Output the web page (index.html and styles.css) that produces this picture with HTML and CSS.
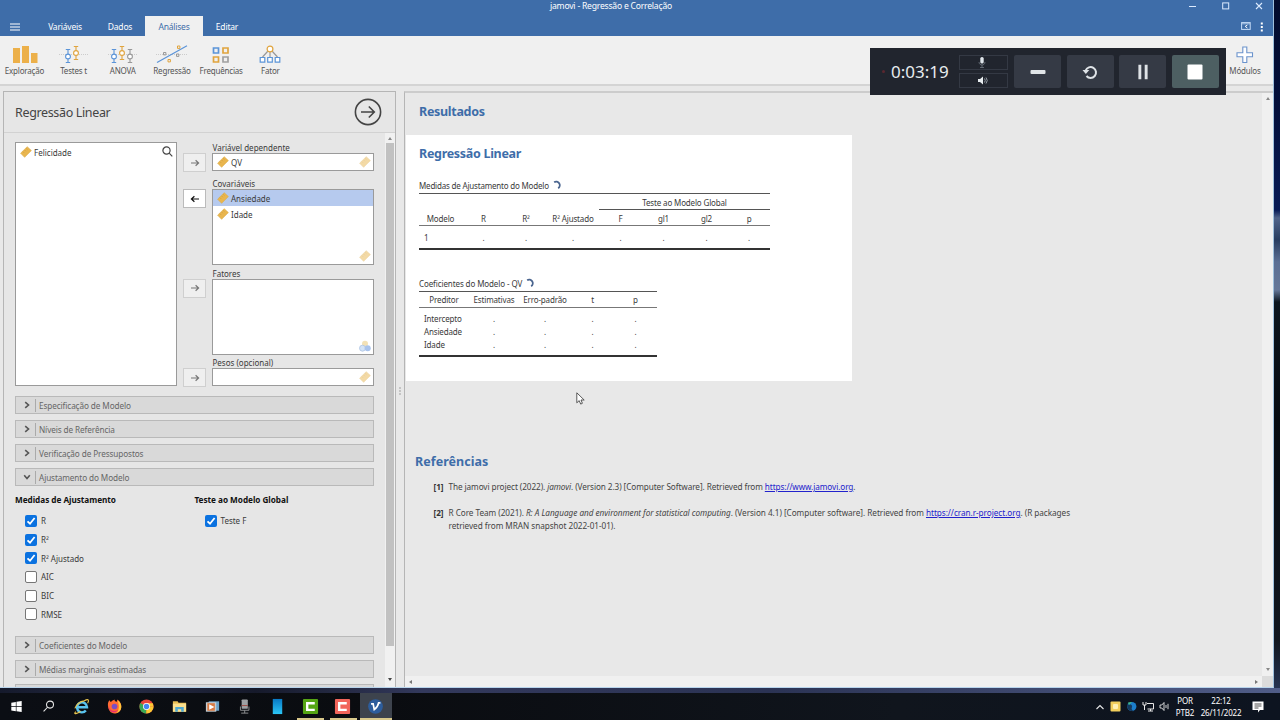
FILE: index.html
```
<!DOCTYPE html>
<html lang="pt">
<head>
  <meta charset="UTF-8">
  <meta name="viewport" content="width=device-width, initial-scale=1.0">
  <title>jamovi - Regressão e Correlação</title>
  <link rel="stylesheet" href="styles.css">
</head>
<body>
  <!-- Shared icons -->
  <svg class="defs" width="0" height="0">
    <symbol id="ruler" viewBox="0 0 12 12">
      <path d="M.6 7.2 7.2 .7 11.4 4.6 4.6 11.3Z" fill="#e9b64f" stroke="#dcab47" stroke-width=".6" stroke-linejoin="round"/>
      <path d="M2.9 5.6l1.3 1.3M4.6 4l1.3 1.3M6.2 2.4l1.3 1.3" stroke="#c58f2c" stroke-width=".5"/>
    </symbol>
    <symbol id="right" viewBox="0 0 10 8">
      <path d="M1 4h7.6M5.6 1.2 8.6 4 5.6 6.8" fill="none" stroke="currentColor" stroke-width="1.2"/>
    </symbol>
    <symbol id="spin" viewBox="0 0 8 9">
      <path d="M1 2A3.1 3.1 0 1 1 4.6 7.4" fill="none" stroke="#4a658f" stroke-width="1.7"/>
    </symbol>
    <symbol id="chev" viewBox="0 0 6 8">
      <path d="M1.2 1.2 4.5 4 1.2 6.8" fill="none" stroke="#555" stroke-width="1.6"/>
    </symbol>
    <symbol id="tick" viewBox="0 0 12 12">
      <path d="M2.5 6.3 5 8.7 9.6 3" fill="none" stroke="#fff" stroke-width="1.8"/>
    </symbol>
  </svg>

  <div class="window">
    <div class="titlebar">
      <span class="app-title">jamovi - Regressão e Correlação</span>
      <div class="win-controls">
        <svg width="8" height="8"><path d="M0 4.5h7" stroke="#dcebff"/></svg>
        <svg width="8" height="8"><rect x=".7" y=".9" width="6" height="6" fill="none" stroke="#dcebff"/></svg>
        <svg width="8" height="8"><path d="M1 1l6 6M7 1 1 7" stroke="#dcebff" stroke-width="1.1"/></svg>
      </div>
    </div>

    <div class="tabs">
      <svg class="burger" width="10" height="8"><path d="M0 1h10M0 4h10M0 7h10" stroke="#fff" stroke-width="1.2"/></svg>
      <span class="tab t-var">Variáveis</span>
      <span class="tab t-dad">Dados</span>
      <span class="tab active">Análises</span>
      <span class="tab t-edi">Editar</span>
      <div class="tab-tools">
        <svg width="10" height="8"><rect x=".6" y=".6" width="8.6" height="6.8" fill="none" stroke="#c6dcf7"/><path d="M1 1.8h8" stroke="#c6dcf7" stroke-width=".8"/><path d="M6.4 3 4.2 4.4 6.4 6" fill="none" stroke="#fff"/></svg>
        <svg width="4" height="10"><path d="M.8 .5h2v2h-2zM.8 4h2v2h-2zM.8 7.5h2v2h-2z" fill="#fff"/></svg>
      </div>
    </div>

    <div class="ribbon">
      <div class="tool w-exp">
        <svg width="28" height="20"><path d="M2 3h7v15H2zM11 1h7v17h-7zM20 8h6.5v10H20z" fill="#ecb04a"/></svg>
        <span>Exploração</span>
      </div>
      <div class="tool">
        <svg width="32" height="20" fill="none" stroke-width="1.1"><path d="M1 9.5h30" stroke="#ccc" stroke-dasharray="1 1"/><g stroke="#5b94d8"><path d="M10 4v14M7.8 4.5h4.4M7.8 17.5h4.4"/><circle cx="10" cy="11.5" r="2.4" fill="#fff"/></g><g stroke="#e0a43e"><path d="M18 1v14M15.8 1.5h4.4M15.8 14.5h4.4"/><circle cx="18" cy="8" r="2.4" fill="#fff"/></g></svg>
        <span>Testes t</span>
      </div>
      <div class="tool">
        <svg width="32" height="20" fill="none" stroke-width="1.1"><path d="M1 9.5h30" stroke="#ccc" stroke-dasharray="1 1"/><g stroke="#5b94d8"><path d="M7 4v14M4.8 4.5h4.4M4.8 17.5h4.4"/><circle cx="7" cy="11.5" r="2.4" fill="#fff"/></g><g stroke="#e0a43e"><path d="M15 1v14M12.8 1.5h4.4M12.8 14.5h4.4"/><circle cx="15" cy="8" r="2.4" fill="#fff"/></g><g stroke="#999"><path d="M23 4v14M20.8 4.5h4.4M20.8 17.5h4.4"/><circle cx="23" cy="11.5" r="2.4" fill="#fff"/></g></svg>
        <span>ANOVA</span>
      </div>
      <div class="tool">
        <svg width="32" height="20" fill="none" stroke-width="1"><path d="M0 9.5h32" stroke="#ccc" stroke-dasharray="1 1"/><path d="M1 17.5 31 .8" stroke="#5b94d8" stroke-width="1.2"/><path d="M7.5 7.5h2.4v2.4H7.5zM20.5 9h2.4v2.4h-2.4z" stroke="#999"/><path d="M21.5 1h2.4v2.4h-2.4zM12 14.5h2.4v2.4H12z" stroke="#e0a43e"/></svg>
        <span>Regressão</span>
      </div>
      <div class="tool">
        <svg width="18" height="20" fill="none" stroke-width="1.7"><path d="M1.5 3h5v5h-5z" stroke="#5b94d8"/><path d="M11 3h5v5h-5zM1.5 12h5v5h-5z" stroke="#e0a43e"/><path d="M11 12h5v5h-5z" stroke="#a0a0a0"/></svg>
        <span>Frequências</span>
      </div>
      <div class="tool">
        <svg width="22" height="20" fill="none" stroke-width="1.2"><path d="M9 6 3.5 12M11 7v5M13 6l5.500 6" stroke="#999"/><circle cx="11" cy="4" r="2.9" fill="#fff" stroke="#e0a43e"/><path d="M1.2 12.5h4.6v4.6H1.2zM8.7 12.5h4.6v4.6H8.7zM16.2 12.5h4.6v4.6h-4.6z" fill="#fff" stroke="#5b94d8"/></svg>
        <span>Fator</span>
      </div>
      <div class="tool modules">
        <svg width="18" height="20"><path d="M6.8 2h4v5.800h5.700v4h-5.700v5.700h-4v-5.700H1v-4h5.800z" fill="#fff" stroke="#6b93cc" stroke-width="1.1"/></svg>
        <span>Módulos</span>
      </div>
    </div>

    <div class="main">
      <!-- Analysis options -->
      <div class="options">
        <div class="options-head">
          <h2>Regressão Linear</h2>
          <svg width="28" height="28" fill="none" stroke="#444"><circle cx="14" cy="14" r="12.6" stroke-width="1.6"/><path d="M7 14h13M14.8 8.5 20.3 14l-5.5 5.5" stroke-width="1.6"/></svg>
        </div>
        <div class="options-body">
          <div class="content">
            <div class="assign">
              <div class="box supplier">
                <div class="var"><svg><use href="#ruler"/></svg>Felicidade</div>
                <svg class="search" width="11" height="11" fill="none" stroke="#444" stroke-width="1.2"><circle cx="4.5" cy="4.5" r="3.6"/><path d="M7.2 7.2 10.3 10.3"/></svg>
              </div>
              <div class="targets">
                <label>Variável dependente</label>
                <div class="target single">
                  <button><svg><use href="#right"/></svg></button>
                  <div class="box"><div class="var"><svg><use href="#ruler"/></svg>QV</div><svg class="hint"><use href="#ruler"/></svg></div>
                </div>
                <label>Covariáveis</label>
                <div class="target multi">
                  <button class="on"><svg><use href="#right"/></svg></button>
                  <div class="box">
                    <div class="var selected"><svg><use href="#ruler"/></svg>Ansiedade</div>
                    <div class="var"><svg><use href="#ruler"/></svg>Idade</div>
                    <svg class="hint"><use href="#ruler"/></svg>
                  </div>
                </div>
                <label>Fatores</label>
                <div class="target multi">
                  <button><svg><use href="#right"/></svg></button>
                  <div class="box"><svg class="hint" viewBox="0 0 12 12"><circle cx="6" cy="3.8" r="3" fill="#e8c56e"/><circle cx="3.5" cy="8.2" r="3" fill="#a9c8ee" stroke="#4f80c4" stroke-width=".7"/><circle cx="8.7" cy="8.2" r="3" fill="#5488da"/></svg></div>
                </div>
                <label>Pesos (opcional)</label>
                <div class="target single">
                  <button><svg><use href="#right"/></svg></button>
                  <div class="box"><svg class="hint"><use href="#ruler"/></svg></div>
                </div>
              </div>
            </div>

            <div class="section"><svg><use href="#chev"/></svg><span>Especificação de Modelo</span></div>
            <div class="section"><svg><use href="#chev"/></svg><span>Níveis de Referência</span></div>
            <div class="section"><svg><use href="#chev"/></svg><span>Verificação de Pressupostos</span></div>
            <div class="section open"><svg><use href="#chev"/></svg><span>Ajustamento do Modelo</span></div>

            <div class="fit">
              <div class="fit-col">
                <h3>Medidas de Ajustamento</h3>
                <div class="check"><svg class="checked"><use href="#tick"/></svg>R</div>
                <div class="check"><svg class="checked"><use href="#tick"/></svg>R²</div>
                <div class="check"><svg class="checked"><use href="#tick"/></svg>R² Ajustado</div>
                <div class="check"><i></i>AIC</div>
                <div class="check"><i></i>BIC</div>
                <div class="check"><i></i>RMSE</div>
              </div>
              <div class="fit-col">
                <h3>Teste ao Modelo Global</h3>
                <div class="check"><svg class="checked"><use href="#tick"/></svg>Teste F</div>
              </div>
            </div>

            <div class="section"><svg><use href="#chev"/></svg><span>Coeficientes do Modelo</span></div>
            <div class="section"><svg><use href="#chev"/></svg><span>Médias marginais estimadas</span></div>
            <div class="section"></div>
          </div>
          <div class="scroll">
            <b class="up"></b>
            <div class="thumb"></div>
            <b class="down"></b>
          </div>
        </div>
      </div>

      <div class="splitter"><i></i><i></i><i></i></div>

      <!-- Results -->
      <div class="results">
        <div class="results-body">
          <h1>Resultados</h1>
          <div class="card">
            <h1>Regressão Linear</h1>

            <div class="caption first"><span>Medidas de Ajustamento do Modelo</span><svg><use href="#spin"/></svg></div>
            <table class="fit-table">
              <colgroup><col class="c43"><col class="c43"><col class="c42"><col class="c52"><col class="c43"><col class="c43"><col class="c43"><col class="c42"></colgroup>
              <thead>
                <tr class="super"><th colspan="4"></th><th colspan="4" class="span">Teste ao Modelo Global</th></tr>
                <tr><th>Modelo</th><th>R</th><th>R²</th><th>R² Ajustado</th><th>F</th><th>gl1</th><th>gl2</th><th>p</th></tr>
              </thead>
              <tbody>
                <tr><td class="name">1</td><td>.</td><td>.</td><td>.</td><td>.</td><td>.</td><td>.</td><td>.</td></tr>
              </tbody>
            </table>

            <div class="caption second"><span>Coeficientes do Modelo - QV</span><svg><use href="#spin"/></svg></div>
            <table class="coef-table">
              <colgroup><col class="c50"><col class="c50"><col class="c52"><col class="c43"><col class="c43"></colgroup>
              <thead>
                <tr><th>Preditor</th><th>Estimativas</th><th>Erro-padrão</th><th>t</th><th>p</th></tr>
              </thead>
              <tbody>
                <tr><td class="name">Intercepto</td><td>.</td><td>.</td><td>.</td><td>.</td></tr>
                <tr><td class="name">Ansiedade</td><td>.</td><td>.</td><td>.</td><td>.</td></tr>
                <tr><td class="name">Idade</td><td>.</td><td>.</td><td>.</td><td>.</td></tr>
              </tbody>
            </table>
          </div>

          <div class="refs">
            <h1>Referências</h1>
            <div class="ref jamovi"><b>[1]</b><p>The jamovi project (2022). <em>jamovi</em>. (Version 2.3) [Computer Software]. Retrieved from <a href="#">https://www.jamovi.org</a>.</p></div>
            <div class="ref"><b>[2]</b><p>R Core Team (2021). <em>R: A Language and environment for statistical computing</em>. (Version 4.1) [Computer software]. Retrieved from <a href="#">https://cran.r-project.org</a>. (R packages<br>retrieved from MRAN snapshot 2022-01-01).</p></div>
          </div>
          <div class="hscroll"><b class="left"></b><b class="right"></b></div>
        </div>
        <div class="vscroll"><b class="up"></b><b class="down"></b></div>
      </div>
    </div>
  </div>

  <div class="taskbar">
    <div class="apps">
      <div class="app"><svg viewBox="0 0 18 18"><path d="M3.5 4.9 8.3 4.2v4.5H3.5zM9 4.1l5.500-.8v5.400H9zM3.500 9.400h4.800v4.500l-4.800-.7zM9 9.400h5.500v5.400L9 14z" fill="#fff"/></svg></div>
      <div class="app"><svg viewBox="0 0 18 18" fill="none" stroke="#e8e8e8" stroke-width="1.1"><circle cx="10.6" cy="7" r="3.7"/><path d="M8 9.8 3.8 14.2"/></svg></div>
      <div class="app"><svg viewBox="0 0 18 18" fill="none"><path d="M4.5 9.7h10.3A5.3 5.3 0 1 0 13.6 13.3" stroke="#59c3ee" stroke-width="2.6"/><path d="M3 14.5C-.5 18 5 16.5 8 14M12 3c5-3 5 0 3.5 2.5M2 11C4 6 8 3.5 12 3" stroke="#eac54e" stroke-width="1.2"/></svg></div>
      <div class="app"><svg viewBox="0 0 18 18"><path d="M2 7C2 5 3 3 4 2.5c0 1 .6 1.5 1.2 1.7C6 3 8 2 9 1.5 9 3 10 3.5 11 4c1-.5 1-1.5 1-2.5 3 2 4.5 5 4.2 8C16 13.5 13 16.5 9 16.5S2 13 2 7Z" fill="#ff6a32"/><path d="M12 2c3 2 4.3 5 4.2 7.5C16 13 14 15 11 16c3-3 3.5-8 1-14Z" fill="#ffc63a"/><path d="M2 8c2 6 7 7 11 4.5-2 3.5-9 5-11-4.5Z" fill="#e72b74"/><circle cx="9" cy="9" r="3" fill="#7a4ec4"/></svg></div>
      <div class="app"><svg viewBox="0 0 18 18"><circle cx="9" cy="9" r="7.5" fill="#e8443a"/><path d="M9 9 2.5 5.3A7.5 7.5 0 0 0 8.8 16.5Z" fill="#38a853"/><path d="M9 9h7.5a7.5 7.5 0 0 1-7.7 7.5Z" fill="#fbc934"/><path d="M9 5.5h6.6L16.5 9H9Z" fill="#fbc934"/><circle cx="9" cy="9" r="3.7" fill="#fff"/><circle cx="9" cy="9" r="2.9" fill="#4385f0"/></svg></div>
      <div class="app"><svg viewBox="0 0 18 18"><path d="M2 3.5h5l1 1.5h8v9.5H2z" fill="#e9bf55"/><path d="M2 6h14v8.5H2z" fill="#fbe08f"/><path d="M4.5 14.5V9.5h9v5h-2.7V12H7.2v2.5z" fill="#4fa9d2"/></svg></div>
      <div class="app"><svg viewBox="0 0 18 18"><path d="M5 3.5h11v10H5z" fill="#6ba1c6"/><path d="M2 4.5h11v10H2z" fill="#c3cdd4"/><path d="M3.5 5.5h8v8h-8z" fill="#d87a43"/><path d="m5.5 6.5 5.5 3-5.5 3Z" fill="#fff"/></svg></div>
      <div class="app"><svg viewBox="0 0 18 18"><rect x="6" y="1.5" width="6.5" height="10" rx="1" fill="#9ea1a4"/><path d="M6 8h6.5" stroke="#9c4a42"/><path d="M4.7 9v4h9V9M9.2 13v3M5.5 16h7.5" fill="none" stroke="#8e9193"/></svg></div>
      <div class="app"><svg viewBox="0 0 18 18"><defs><linearGradient id="ph" x2="0" y2="1"><stop stop-color="#0879c4"/><stop offset="1" stop-color="#2bc6f6"/></linearGradient></defs><path d="M4 1h10v16H4z" fill="url(#ph)"/></svg></div>
      <div class="app run"><svg viewBox="0 0 18 18"><rect x="1" y="1" width="16" height="16" rx="1" fill="#55a514"/><path d="M13.5 5.5H5.5v7h8" fill="none" stroke="#fff" stroke-width="2.5"/></svg></div>
      <div class="app run"><svg viewBox="0 0 18 18"><rect x="1" y="1" width="16" height="16" rx="1" fill="#f2655b"/><path d="M13.5 5.5H5.5v7h8" fill="none" stroke="#fff" stroke-width="2.5"/></svg></div>
      <div class="app run current"><svg viewBox="0 0 18 18"><circle cx="9" cy="9" r="7.8" fill="#2d5d9c"/><path d="M4.3 6.2h2.200L7.700 12.300C10.300 10.500 11.800 8 12.300 5.200h1.900" fill="none" stroke="#fff" stroke-width="1.8"/></svg></div>
    </div>
    <div class="tray">
      <svg width="10" height="8"><path d="M1.5 6 5 2.5 8.5 6" fill="none" stroke="#e8e8e8" stroke-width="1.1"/></svg>
      <svg width="11" height="11"><rect x=".5" y=".5" width="10" height="10" rx="1" fill="#f2cf5c"/><rect x="3" y="3" width="5" height="5" rx="1" fill="#fff1b4"/></svg>
      <svg width="11" height="11"><circle cx="5.8" cy="5.5" r="4.6" fill="#1c7ecb"/><path d="M1 4c3-2 6 0 5 2s0 3.5 2 4C4 11 1 8 1 4Z" fill="#153a5e"/><path d="M2 1.5 6 1 3 4Z" fill="#40bd8b"/></svg>
      <svg width="12" height="11" fill="none" stroke="#e8e8e8"><path d="M5 2.5h6.5v5.5H5.5M1 1v3h3V1M2.5 4v5M6 10h5M8.5 8v2"/></svg>
      <svg width="11" height="11" fill="none" stroke="#e8e8e8" stroke-width=".9"><path d="M1 4h1.8L5 1.5v8L2.8 7H1zM7 4v3M9 2.8v5.4"/></svg>
      <div class="lang">POR<br>PTB2</div>
      <div class="clock">22:12<br>26/11/2022</div>
      <svg width="12" height="12"><path d="M.5 .5h11v8.5H8L6 11.5V9H.5z" fill="#fff"/><path d="M2.5 3h7M2.5 5h7M2.5 7h4" stroke="#222" stroke-width=".8"/></svg>
    </div>
  </div>

  <!-- Screen recorder bar floating over the app -->
  <div class="recorder">
    <span class="dot"></span>
    <span class="time">0:03:19</span>
    <div class="audio">
      <div><svg width="8" height="11"><rect x="2.3" y="0" width="3.4" height="6.5" rx="1.6" fill="#dfe5ea"/><path d="M1 5c0 4 6 4 6 0M4 8v2.5M2 10.5h4" fill="none" stroke="#77808a" stroke-width=".7"/></svg></div>
      <div><svg width="11" height="9"><path d="M1 3h2l3-2.5v8L3 6H1z" fill="#e8edf0"/><path d="M7.5 2.5q1.5 2 0 4M9 1.5q2.5 3 0 6" fill="none" stroke="#929aa2"/></svg></div>
    </div>
    <div class="rec-btn"><svg width="16" height="16"><rect x=".5" y="6" width="15" height="4" rx="1" fill="#e1e5e8"/></svg></div>
    <div class="rec-btn"><svg width="16" height="16"><path d="M4.5 12A5.4 5.4 0 1 0 3.6 6.5" fill="none" stroke="#dfe3e7" stroke-width="2"/><path d="M.5 6h6.8L3.8 10Z" fill="#dfe3e7"/></svg></div>
    <div class="rec-btn"><svg width="16" height="16"><path d="M3.4 .8h2.9v14.4H3.4zM9.7 .8h2.9v14.4H9.7z" fill="#dfe3e7"/></svg></div>
    <div class="rec-btn stop"><svg width="16" height="16"><rect x=".5" y=".5" width="15" height="15" rx="1" fill="#fff"/></svg></div>
  </div>

  <svg class="cursor" width="10" height="14"><path d="M.8 .8v10l2.400-2.200 1.500 3.500 1.700-.8L5 8h3.200Z" fill="#fff" stroke="#333" stroke-width=".8"/></svg>
</body>
</html>
```
FILE: styles.css
```
* {
  box-sizing: border-box;
}

body {
  margin: 0;
  width: 1280px;
  height: 720px;
  overflow: hidden;
  position: relative;
  font-family: "Noto Sans", "Open Sans", sans-serif;
  font-size: 8px;
  color: #3a3a3a;
  background: linear-gradient(#020b2c 0, #04103c 110px, #081b56 210px, #50648a 218px, #283d60 240px, #5b6f94 262px, #657798 290px, #0c151e 302px, #060b11 420px, #10161f 640px, #273452 690px);
}

svg {
  display: block;
  flex: none;
}

.defs {
  position: absolute;
}

h1, h2, h3, p {
  margin: 0;
}

.window {
  width: 1274px;
  height: 688px;
  display: flex;
  flex-direction: column;
  background: #f0f0f0;
  border-right: 1px solid #9ec0dd;
  border-bottom: 1px solid #b8d4ec;
}

/* Title and tabs */
.titlebar {
  height: 16px;
  background: #3e6da9;
  display: flex;
  justify-content: space-between;
  padding: 0 10px 0 550px;
  color: #fff;
}

.app-title {
  font-size: 8.6px;
  line-height: 12px;
  letter-spacing: -0.22px;
  white-space: nowrap;
}

.win-controls {
  display: flex;
  gap: 25px;
  padding-top: 2px;
}

.tabs {
  height: 20px;
  background: #3e6da9;
  display: flex;
  color: #fff;
  font-size: 8.5px;
  line-height: 22px;
}

.burger {
  margin: 7px 28px 0 10px;
}

.tab {
  text-align: center;
  letter-spacing: -0.2px;
}

.t-var {
  width: 34px;
}

.t-dad {
  width: 63px;
  padding-left: 13px;
}

.t-edi {
  width: 48px;
}

.tab.active {
  width: 58px;
  background: #f0f0f0;
  color: #3e6da9;
}

.tab-tools {
  margin-left: auto;
  display: flex;
  gap: 9px;
  padding: 6px 9px 0 0;
}

.ribbon {
  height: 50px;
  display: flex;
  border-bottom: 2px solid #d4d4d4;
  padding-top: 9px;
}

.tool {
  width: 49.2px;
  display: flex;
  flex-direction: column;
  align-items: center;
  font-size: 8px;
  line-height: 12px;
  color: #555;
  letter-spacing: -0.2px;
}

.w-exp {
  width: 49px;
}

.modules {
  margin-left: auto;
  width: 56px;
}

.main {
  flex: 1;
  display: flex;
  min-height: 0;
  padding: 5px 0 0 3px;
  background: #e8e8e8;
}

/* Options panel */
.options {
  width: 393px;
  border: 1px solid #b5b5b5;
  border-bottom: 0;
  background: #e6e6e6;
  display: flex;
  flex-direction: column;
}

.options-head {
  height: 41px;
  display: flex;
  align-items: center;
  justify-content: space-between;
  padding: 0 13px 0 11px;
  border-bottom: 1px solid #d2d2d2;
}

.options-head h2 {
  font-size: 12.5px;
  line-height: 16px;
  padding-top: 1px;
  font-weight: normal;
  letter-spacing: -0.35px;
  color: #444;
}

.options-body {
  flex: 1;
  min-height: 0;
  display: flex;
}

.content {
  flex: 1;
  padding: 9px 11px 0;
  overflow: hidden;
}

.assign {
  display: flex;
  justify-content: space-between;
  height: 245px;
  margin-bottom: 9px;
}

.box {
  background: #fff;
  border: 1px solid #9a9a9a;
  position: relative;
}

.supplier {
  width: 162px;
  height: 244px;
}

.var {
  height: 16px;
  display: flex;
  align-items: center;
  gap: 2px;
  padding-left: 4px;
}

.supplier .var {
  height: 18px;
}

.var svg, .hint {
  width: 12px;
  height: 12px;
}

.var.selected {
  background: #b6caee;
}

.search {
  position: absolute;
  right: 3px;
  top: 3px;
}

.hint {
  position: absolute;
  right: 2px;
  bottom: 2px;
  opacity: .5;
}

.targets {
  width: 191px;
}

.targets label {
  display: block;
  height: 11px;
  line-height: 11px;
  margin-left: 29.5px;
}

.target {
  display: flex;
  justify-content: space-between;
  align-items: flex-start;
}

.target .box {
  width: 162px;
  height: 100%;
}

.target.single {
  height: 18px;
  margin-bottom: 7px;
}

.target.multi {
  height: 76px;
  margin-bottom: 2.5px;
}

.target button {
  width: 23px;
  height: 19px;
  padding: 0;
  display: flex;
  align-items: center;
  justify-content: center;
  background: #efefef;
  border: 1px solid #cfcfcf;
  color: #777;
}

.target button svg {
  width: 10px;
  height: 8px;
}

.target button.on {
  background: #fff;
  border-color: #bbb;
  color: #111;
}

.target button.on svg {
  transform: scaleX(-1);
}

.section {
  height: 18px;
  margin-bottom: 6px;
  background: #d9d9d9;
  border: 1px solid #b9b9b9;
  display: flex;
  align-items: center;
  color: #666;
}

.section svg {
  width: 6px;
  height: 8px;
  margin: 0 5px 0 8px;
}

.section.open svg {
  transform: rotate(90deg);
}

.section span {
  border-left: 1px solid #aaa;
  padding-left: 3px;
  line-height: 13px;
  font-size: 8.2px;
  letter-spacing: -0.1px;
}

.fit {
  display: flex;
  height: 144px;
  padding-top: 2px;
}

.fit-col {
  width: 179.5px;
}

.fit h3 {
  font-size: 8.2px;
  line-height: 12px;
  letter-spacing: -0.03px;
  color: #111;
  margin-bottom: 5.5px;
}

.check {
  height: 18.7px;
  display: flex;
  align-items: center;
  gap: 4px;
  padding-left: 10px;
}

.check i, .check svg {
  width: 12px;
  height: 12px;
  border-radius: 2px;
}

.check i {
  border: 1px solid #767676;
  background: #fff;
}

.checked {
  background: #0b72e0;
}

/* Scrollbars */
.scroll {
  width: 10px;
  background: #f1f1f1;
  display: flex;
  flex-direction: column;
  align-items: center;
}

.thumb {
  width: 8px;
  height: 503px;
  margin-top: 3px;
  background: #c1c1c1;
}

.up, .down, .left, .right {
  width: 0;
  height: 0;
  border: 2.5px solid transparent;
}

.up {
  border-top: 0;
  border-bottom: 3px solid #888;
  margin-top: 4px;
}

.down {
  border-bottom: 0;
  border-top: 3px solid #444;
  margin: auto 0 6px;
}

.left {
  border-left: 0;
  border-right: 3px solid #777;
}

.right {
  border-right: 0;
  border-left: 3px solid #777;
}

.splitter {
  width: 8px;
  display: flex;
  flex-direction: column;
  align-items: center;
  justify-content: center;
  gap: 1px;
  padding-top: 3px;
}

.splitter i {
  width: 2px;
  height: 2px;
  background: #c4c4c4;
}

/* Results */
.results {
  flex: 1;
  display: flex;
  border-left: 1px solid #b5b5b5;
  border-top: 2px solid #ccc;
  background: #e8e8e8;
}

.results-body {
  flex: 1;
  display: flex;
  flex-direction: column;
}

.results h1 {
  font-size: 12.5px;
  line-height: 16px;
  letter-spacing: -0.3px;
  color: #3e6da9;
  margin: 11px 0 15px 14px;
}

.card {
  width: 446px;
  height: 246px;
  margin-left: 1px;
  padding: 11px 0 0 13px;
  background: #fff;
}

.results .card h1 {
  margin: 0;
}

.caption {
  display: flex;
  align-items: center;
  gap: 4px;
  height: 17px;
  margin-top: 14px;
  letter-spacing: -0.1px;
}

.caption.first {
  letter-spacing: -0.19px;
}

.caption.first span {
  padding-top: 1px;
}

.caption svg {
  width: 9px;
  height: 10px;
}

.caption.second {
  height: 16px;
  margin-top: 25px;
}

table {
  table-layout: fixed;
  border-collapse: separate;
  border-spacing: 0;
  border-top: 1px solid #555;
  border-bottom: 2px solid #333;
}

.fit-table {
  width: 351px;
}

.coef-table {
  width: 238px;
}

th, td {
  padding: 0;
  font-weight: normal;
  text-align: center;
  white-space: nowrap;
  line-height: 12px;
  letter-spacing: -0.15px;
}

.c42 { width: 42px; }
.c43 { width: 43px; }
.c50 { width: 50px; }
.c52 { width: 52px; }

.fit-table tr, .super th {
  height: 16px;
}

.fit-table th {
  padding-top: 2px;
}

.super .span {
  border-bottom: 1px solid #555;
}

thead tr:last-child th {
  border-bottom: 1px solid #777;
}

.fit-table tbody tr {
  height: 22px;
}

.fit-table td {
  padding-top: 2px;
}

td.name {
  text-align: left;
  padding-left: 5px;
}

.coef-table thead tr {
  height: 16px;
}

.coef-table tbody td {
  height: 13.3px;
}

.coef-table tbody tr:first-child td {
  height: 17px;
  padding-top: 4px;
}

.coef-table tbody tr:last-child td {
  height: 17px;
  padding-bottom: 4px;
}

.refs {
  padding-top: 72px;
  color: #444;
}

.results .refs h1 {
  margin: 1px 0 10px 10px;
  letter-spacing: 0.05px;
}

.ref {
  display: flex;
  margin: 0 0 13px 28.5px;
  line-height: 13px;
  font-size: 8.2px;
  letter-spacing: -0.04px;
  white-space: nowrap;
}

.ref.jamovi {
  letter-spacing: -0.08px;
}

.ref b {
  width: 15px;
  color: #333;
}

.ref a {
  color: #2222cc;
}

.hscroll {
  margin-top: auto;
  height: 11px;
  background: #f0f0f0;
  display: flex;
  align-items: center;
  justify-content: space-between;
  padding: 0 4px;
}

.vscroll {
  width: 11px;
  background: linear-gradient(#dcdcdc, #dcdcdc) 0 100% / 11px 11px no-repeat #f0f0f0;
  display: flex;
  flex-direction: column;
  align-items: center;
}

.vscroll .down {
  margin-bottom: 16px;
  border-top-color: #888;
}

/* Taskbar */
.taskbar {
  height: 32px;
  display: flex;
  justify-content: space-between;
  background: linear-gradient(90deg, #0b0e14, #0a0c10 30%, #10151d 70%, #0d1420) 0 5px no-repeat, linear-gradient(90deg, #151a2c, #262b44 10%, #161a2b 20%, #33395c 33%, #2b3354 60%, #505d88);
}

.apps {
  display: flex;
}

.app {
  width: 32.7px;
  height: 32px;
  padding: 10px 0 0 7.5px;
}

.app svg {
  width: 17px;
  height: 17px;
}

.app.run {
  background: linear-gradient(#d9c98c, #d9c98c) 3px 30px / 27px 2px no-repeat;
}

.app.current {
  background: linear-gradient(#d9c98c, #d9c98c) 0 30px / 32px 2px no-repeat, linear-gradient(#3d434d, #3d434d) 0 5px no-repeat;
}

.tray {
  display: flex;
  align-items: center;
  padding: 5px 16px 0 0;
  gap: 5px;
  color: #fff;
  font-size: 8px;
  line-height: 11.5px;
  text-align: center;
}

.lang {
  width: 20px;
  letter-spacing: -0.2px;
}

.clock {
  width: 42px;
  margin: 0 5px 0 0;
  letter-spacing: -0.2px;
}

/* Recorder overlay */
.recorder {
  position: absolute;
  left: 870px;
  top: 48px;
  width: 356px;
  height: 47px;
  background: #21252e;
  display: flex;
  align-items: center;
  padding-left: 12px;
}

.dot {
  width: 3px;
  height: 3px;
  border-radius: 50%;
  background: #5b2730;
}

.time {
  width: 69px;
  padding-left: 6px;
  font-size: 17px;
  color: #e8ecef;
}

.audio {
  display: flex;
  flex-direction: column;
  gap: 3px;
  flex: none;
  margin: 0 6px 0 5px;
}

.audio div {
  width: 49px;
  height: 15px;
  border: 1px solid #343944;
  display: flex;
  align-items: center;
  justify-content: center;
}

.audio svg {
  margin-right: 3px;
}

.rec-btn {
  flex: none;
  width: 47px;
  height: 33px;
  margin-right: 5.6px;
  border-radius: 2px;
  background: #353a45;
  display: flex;
  align-items: center;
  justify-content: center;
}

.rec-btn.stop {
  background: #4d5f62;
}

.cursor {
  position: absolute;
  left: 576px;
  top: 392px;
}
```
